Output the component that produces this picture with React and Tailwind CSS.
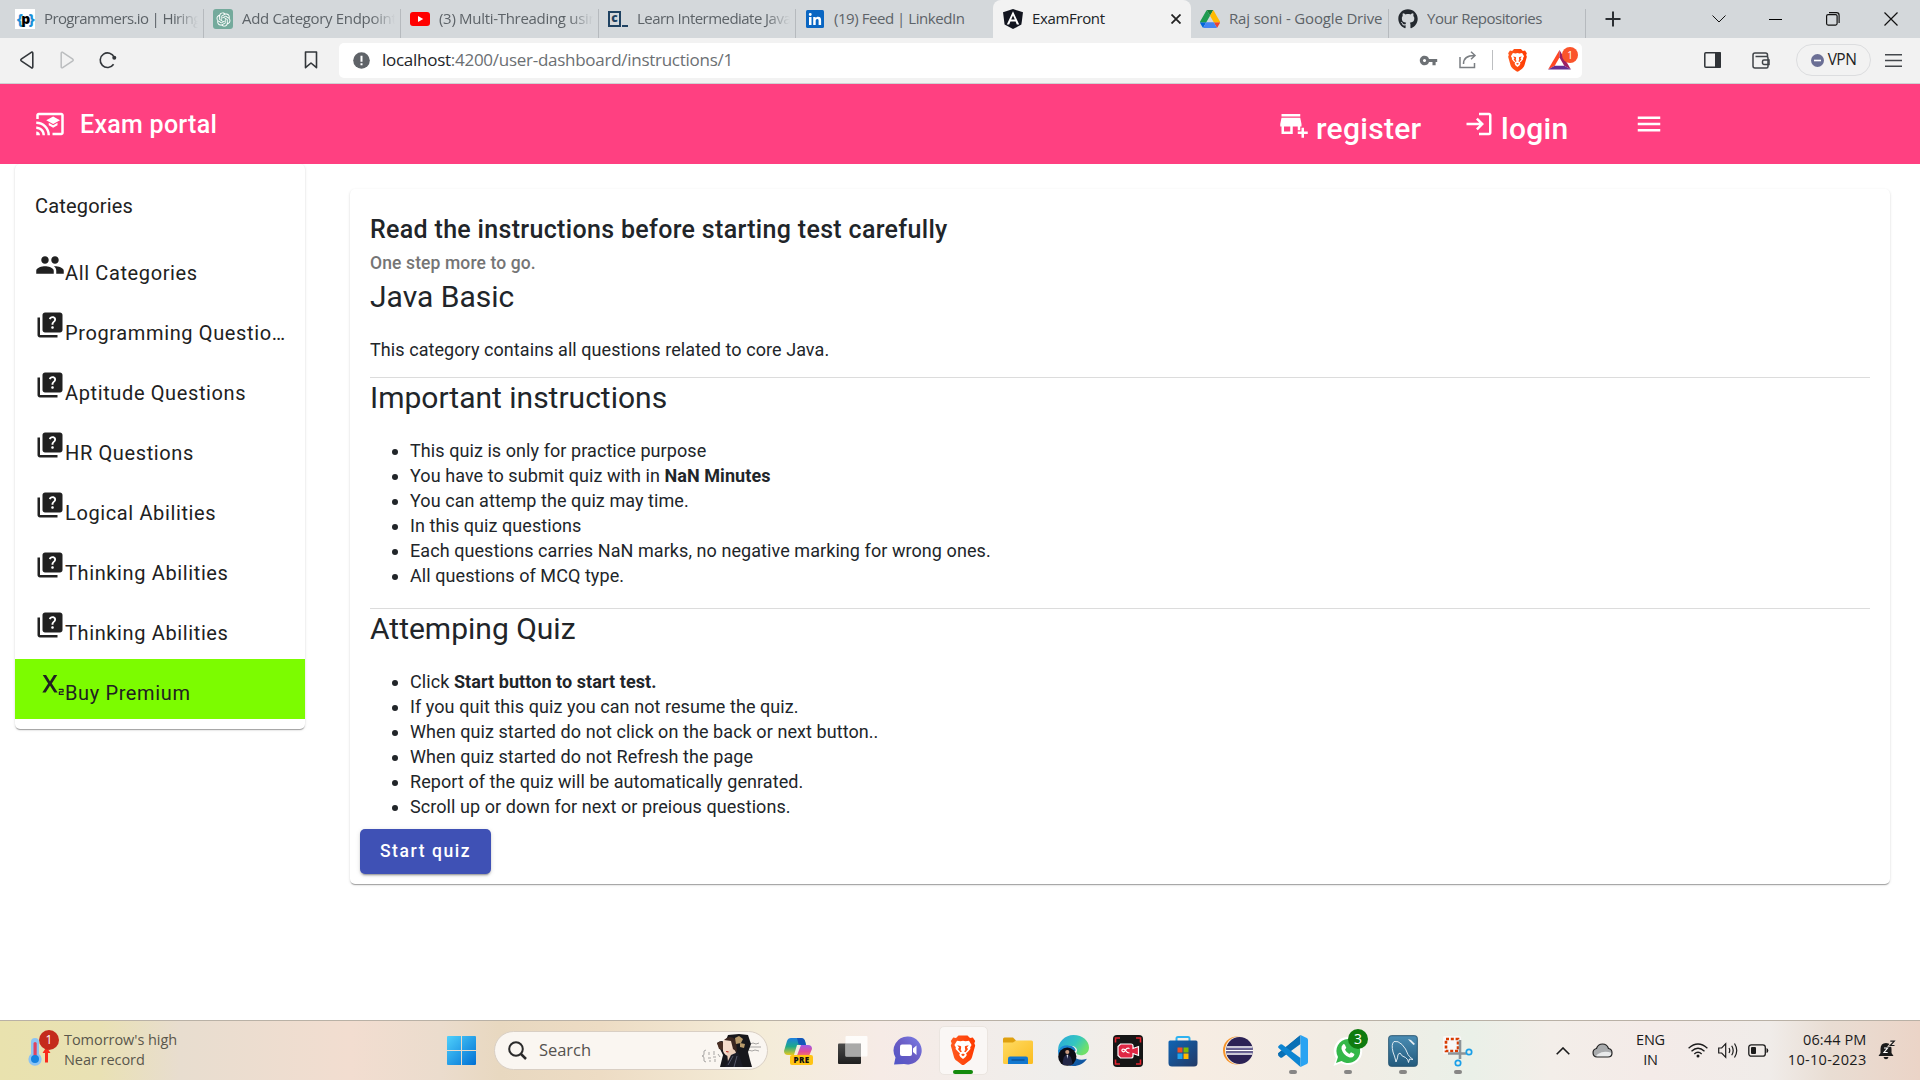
import React from "react";
import {
  MdCastForEducation,
  MdAddBusiness,
  MdLogin,
  MdMenu,
  MdPeople,
  MdQuiz,
  MdSubscript,
  MdVpnKey,
} from "react-icons/md";
import { FaGithub } from "react-icons/fa";
import { RiOpenaiFill } from "react-icons/ri";

const CHROME = "font-['Open_Sans','Noto_Sans',sans-serif]";

/* ---------- shared logos ---------- */

function BraveLogo({ className }) {
  return (
    <svg viewBox="0 0 26 30" className={className}>
      <defs>
        <linearGradient id="brv" x1="0" x2="1">
          <stop offset="0" stopColor="#ff5a1f" />
          <stop offset="1" stopColor="#ff3a00" />
        </linearGradient>
      </defs>
      <path
        fill="url(#brv)"
        d="M17.5 0H8.5L6 2.6 3.2 2 .8 5.4l.9 2.3L.8 10 3.8 21c.6 2.100 1.500 3.400 3.200 4.600L11.500 29c.9.7 2.100.7 3 0l4.500-3.400c1.700-1.200 2.600-2.500 3.200-4.600L25.200 10l-.9-2.300.9-2.300L22.800 2 20 2.600z"
      />
      <path
        fill="#fff"
        d="M13 5.200l2.500.6L19 5.200l2.600 4.300-1.400 2.200.2 1.800-2.700 3.100-1.600 1.100.7 1.700-1.300 2.100L13 23.600l-2.500-2.100-1.300-2.100.7-1.700-1.600-1.100-2.700-3.100.2-1.800-1.400-2.200L7 5.200l3.500.6z"
      />
      <path
        fill="#ff4a10"
        d="M7.300 9.700l3.300.8.6.8-.5 3.500 1.400.9-1.700 1.100-2.500-3.300 1.300-1.200zM18.700 9.700l-3.300.8-.6.8.5 3.500-1.400.9 1.700 1.100 2.500-3.300-1.300-1.200zM11 19.200l2-1.100 2 1.100-2 1.500z"
      />
    </svg>
  );
}

function DriveLogo() {
  return (
    <svg viewBox="0 0 87 78" className="h-[18px] w-5">
      <path fill="#0066da" d="M6.600 66.850l3.850 6.650c.8 1.400 1.950 2.500 3.300 3.300L27.500 53H0c0 1.550.4 3.100 1.200 4.500z" />
      <path fill="#1e9b50" d="M43.650 25L29.900 1.200c-1.350.8-2.500 1.900-3.300 3.300l-25.400 44C.4 49.900 0 51.450 0 53h27.500z" />
      <path fill="#ea4335" d="M73.550 76.800c1.350-.8 2.500-1.900 3.300-3.300l1.600-2.750 7.650-13.250c.8-1.400 1.200-2.950 1.200-4.500H59.800l5.850 11.500z" />
      <path fill="#188038" d="M43.650 25L57.400 1.200C56.050.4 54.500 0 52.900 0H34.400c-1.600 0-3.150.45-4.500 1.200z" />
      <path fill="#4285f4" d="M59.800 53H27.500L13.750 76.800c1.350.8 2.900 1.200 4.500 1.200h50.800c1.600 0 3.150-.45 4.500-1.200z" />
      <path fill="#ffba00" d="M73.400 26.500L60.700 4.500c-.8-1.400-1.950-2.500-3.300-3.300L43.650 25 59.800 53h27.450c0-1.550-.4-3.100-1.200-4.500z" />
    </svg>
  );
}

/* ---------- browser tabs ---------- */

const tabs = [
  {
    title: "Programmers.io | Hiring",
    fade: true,
    width: "w-[204px] pl-[15px]",
    track: "tracking-[-0.620px]",
    icon: (
      <div className="flex h-5 w-5 items-center justify-center bg-white text-[14px] leading-none font-extrabold tracking-[-1.500px]">
        <span className="text-[#1b8fd8]">{"{"}</span>
        <span className="text-black">p</span>
        <span className="text-[#1b8fd8]">{"}"}</span>
      </div>
    ),
  },
  {
    title: "Add Category Endpoint",
    fade: true,
    width: "w-[197px] pl-[9px]",
    track: "tracking-[-0.320px]",
    icon: (
      <div className="flex h-5 w-5 items-center justify-center rounded-[3px] bg-[#74aa9c] text-white">
        <RiOpenaiFill size={17} />
      </div>
    ),
  },
  {
    title: "(3) Multi-Threading usin",
    fade: true,
    width: "w-[198px] pl-[9px]",
    track: "tracking-[-0.3px]",
    icon: (
      <svg viewBox="0 0 20 20" className="h-5 w-5">
        <rect x="0" y="3" width="20" height="14" rx="3" fill="#f00" />
        <path d="M8 7l5.200 3L8 13z" fill="#fff" />
      </svg>
    ),
  },
  {
    title: "Learn Intermediate Java",
    fade: true,
    width: "w-[197px] pl-[9px]",
    track: "tracking-[-0.540px]",
    icon: (
      <div className="flex h-5 w-5 items-end">
        <div className="mb-[2px] flex h-4 w-[13px] shrink-0 items-center justify-center border-2 border-[#1f4262] pb-[2px] text-[12px] leading-none font-extrabold text-[#1f4262]">
          c
        </div>
        <div className="mb-[2px] ml-px h-[2px] w-[6px] bg-[#1f4262]" />
      </div>
    ),
  },
  {
    title: "(19) Feed | LinkedIn",
    width: "w-[197px] pl-[9px]",
    track: "tracking-[-0.450px]",
    noLine: true,
    icon: (
      <svg viewBox="0 0 20 20" className="h-5 w-5">
        <rect x="1" y="1" width="18" height="18" rx="1.500" fill="#0a66c2" />
        <path fill="#fff" d="M4 8h2.500v8H4zM5.250 4a1.450 1.450 0 110 2.900 1.450 1.450 0 010-2.900zM8.200 8h2.400v1.100c.4-.7 1.200-1.300 2.500-1.300 2.500 0 3 1.600 3 3.800V16h-2.500v-3.900c0-1 0-2.100-1.300-2.100s-1.600 1-1.600 2V16H8.200z" />
      </svg>
    ),
  },
  {
    title: "ExamFront",
    width: "w-[198px] pl-[10px]",
    track: "tracking-[-0.350px]",
    active: true,
    icon: (
      <svg viewBox="0 0 20 20" className="h-5 w-5">
        <path fill="#12151f" d="M10 0L0 3.300l1.600 12.300L10 20l8.400-4.400L20 3.300z" />
        <path fill="#fff" d="M10 2.200L3.800 15.500h2.400l1.200-3.100h5.200l1.200 3.100h2.400zm0 4.300l1.800 4.100H8.200z" />
      </svg>
    ),
  },
  {
    title: "Raj soni - Google Drive",
    width: "w-[198px] pl-[9px]",
    track: "tracking-[-0.160px]",
    icon: <DriveLogo />,
  },
  {
    title: "Your Repositories",
    width: "w-[197px] pl-[9px]",
    track: "tracking-[-0.5px]",
    icon: <FaGithub size={20} color="#24292f" />,
  },
];

function TabStrip() {
  return (
    <div className="flex h-[38px] shrink-0 bg-[#d4d8db]">
      {tabs.map((t) => (
        <div
          key={t.title}
          className={`${t.width} flex shrink-0 items-center ${
            t.active ? "rounded-t-[8px] bg-[#f2f2f2] text-[#202428]" : "text-[#5d6368]"
          }`}
        >
          <div className="flex w-5 shrink-0 justify-center">{t.icon}</div>
          <div
            className={`-mt-px ml-[9px] flex-1 overflow-hidden text-[15px] whitespace-nowrap ${t.track} ${
              t.fade ? "mr-[5px] [mask-image:linear-gradient(to_right,black_calc(100%-24px),transparent)]" : ""
            }`}
          >
            {t.title}
          </div>
          {t.active && (
            <svg viewBox="0 0 10 10" className="mr-[10px] h-[10px] w-[10px]" stroke="#222" strokeWidth="1.800">
              <path d="M.5.500l9 9M9.500.500l-9 9" />
            </svg>
          )}
          {!t.active && !t.noLine && <div className="mt-auto h-[29px] w-px bg-[#b6babe]" />}
        </div>
      ))}
      <div className="flex flex-1 items-center">
        <svg viewBox="0 0 16 16" className="ml-[19px] h-4 w-4" stroke="#2b2f33" strokeWidth="2">
          <path d="M8 .500v15M.500 8h15" />
        </svg>
        <div className="ml-[69px] flex flex-1 items-center text-black">
          <div className="flex w-[57px] justify-center">
            <svg viewBox="0 0 14 8" className="h-2 w-[14px]" fill="none" stroke="#111">
              <path d="M.5.500L7 7 13.500.500" />
            </svg>
          </div>
          <div className="flex w-[57px] justify-center">
            <div className="h-px w-[13px] bg-black" />
          </div>
          <div className="flex w-[57px] justify-center">
            <svg viewBox="0 0 14 14" className="h-[14px] w-[14px]" fill="none" stroke="#111" strokeWidth="1.200">
              <rect x=".6" y="2.600" width="10.500" height="10.500" rx="1.500" />
              <path d="M3 .7h7.500a2.600 2.600 0 012.600 2.600V11" />
            </svg>
          </div>
          <div className="flex w-[59px] justify-center">
            <svg viewBox="0 0 14 14" className="h-[14px] w-[14px]" stroke="#111" strokeWidth="1.200">
              <path d="M.5.500l13 13M13.500.500l-13 13" />
            </svg>
          </div>
        </div>
      </div>
    </div>
  );
}

/* ---------- address bar ---------- */

function AddressBar() {
  return (
    <div className="flex h-[46px] shrink-0 items-center border-b border-[#cfd2d4] bg-[#f2f2f2] pr-[18px] pb-px pl-[20px]">
      <svg viewBox="0 0 14 18" className="h-[18px] w-[14px]" fill="none" stroke="#33373b" strokeWidth="1.600" strokeLinejoin="round">
        <path d="M11.300 1.300L1.200 8.200q-.8.800 0 1.600l10.100 6.900q1.500.6 1.500-1V2.300q0-1.600-1.500-1z" />
      </svg>
      <svg viewBox="0 0 14 18" className="ml-[26px] h-[18px] w-[14px]" fill="none" stroke="#bbbdbf" strokeWidth="1.500" strokeLinejoin="round">
        <path d="M2.700 1.300l10.100 6.900q.8.800 0 1.600L2.700 16.700q-1.500.6-1.500-1V2.300q0-1.600 1.500-1z" />
      </svg>
      <svg viewBox="0 0 18 18" className="ml-[25px] h-[18px] w-[18px]" fill="none" stroke="#33373b" strokeWidth="1.600">
        <path d="M14.600 13.300A7.300 7.300 0 1115.300 6.500" />
        <circle cx="15.300" cy="6.800" r="2" fill="#33373b" stroke="none" />
      </svg>
      <svg viewBox="0 0 14 18" className="ml-[187px] h-[18px] w-[14px]" fill="none" stroke="#33373b" strokeWidth="1.600" strokeLinejoin="round">
        <path d="M1.500 1h11v15.700L7 12l-5.500 4.700z" />
      </svg>
      <div className="ml-[21px] flex h-[35px] w-[1243px] items-center rounded-[5px] bg-white pr-[4px] pl-[14px]">
        <svg viewBox="0 0 17 17" className="h-[17px] w-[17px]">
          <circle cx="8.500" cy="8.500" r="8.300" fill="#5f6368" />
          <path d="M7.500 3.700h2v6h-2zM7.500 11.300h2v2h-2z" fill="#fff" />
        </svg>
        <div className="ml-[12px] text-[17px] tracking-[-0.270px] text-[#6b6f73]">
          <span className="text-[#222529]">localhost</span>:4200/user-dashboard/instructions/1
        </div>
        <div className="ml-auto flex items-center">
          <MdVpnKey size={19} color="#6d7175" />
          <svg viewBox="0 0 18 18" className="ml-[21px] h-[18px] w-[18px]" fill="none" stroke="#7b7f83" strokeWidth="1.500">
            <path d="M1 6v10.500h14.500V12M4.500 13c0-5.500 3-8.500 11-8.500M12 .800l4 3.700-4 3.700" />
          </svg>
          <div className="ml-[15px] h-[20px] w-px bg-[#bdbfc1]" />
          <BraveLogo className="ml-[14px] h-[23px] w-[21px]" />
          <div className="relative ml-[20px] h-[26px] w-[30px]">
            <svg viewBox="0 0 24 21" className="mt-[3px] h-[20px] w-[23px]">
              <path d="M12 0L0 20.500l7-4L12 8z" fill="#ff4724" />
              <path d="M12 0l12 20.500-7-4L12 8z" fill="#9e1f63" />
              <path d="M0 20.500h24l-7-4H7z" fill="#662d91" />
            </svg>
            <div className="absolute top-0 right-0 flex h-[16px] w-[16px] items-center justify-center rounded-full bg-[#fb542b] text-[10px] leading-none text-white">
              1
            </div>
          </div>
        </div>
      </div>
      <svg viewBox="0 0 17 16" className="ml-[122px] h-4 w-[17px]">
        <rect x=".8" y=".8" width="15.400" height="14.400" rx="1" fill="none" stroke="#2f3337" strokeWidth="1.500" />
        <rect x="11" y="0" width="6" height="16" rx="1" fill="#2f3337" />
      </svg>
      <svg viewBox="0 0 18 17" className="ml-[31px] h-[17px] w-[18px]" fill="none" stroke="#3f4347" strokeWidth="1.500">
        <path d="M15.500 4.500V3a2 2 0 00-2-2H3a2 2 0 00-2 2v11a2 2 0 002 2h11.500a1.500 1.500 0 001.500-1.500V6a1.500 1.500 0 00-1.500-1.500H3.500" />
        <path d="M17 8h-5a1.500 1.500 0 00-1.500 1.500V11A1.500 1.500 0 0012 12.500h5z" />
      </svg>
      <div className="ml-[26px] flex h-8 w-[75px] items-center justify-center rounded-full border border-[#dcdddf]">
        <svg viewBox="0 0 13 13" className="h-[13px] w-[13px]">
          <circle cx="6.500" cy="6.500" r="6.500" fill="#6b6f95" />
          <path d="M3 5.700h7v1.600H3z" fill="#fff" />
        </svg>
        <span className="ml-[4px] text-[15.500px] tracking-[-0.500px] text-[#222]">VPN</span>
      </div>
      <svg viewBox="0 0 17 13" className="ml-[14px] h-[13px] w-[17px]" stroke="#44484c" strokeWidth="1.400">
        <path d="M0 .700h17M0 6.500h17M0 12.300h17" />
      </svg>
    </div>
  );
}

/* ---------- application ---------- */

function NavBar() {
  return (
    <div className="flex h-20 shrink-0 items-center bg-[#ff4081] font-['Roboto',sans-serif] font-medium text-white">
      <MdCastForEducation size={30} className="ml-[35px]" />
      <span className="mt-[2px] ml-[15px] w-[1199px] text-[25px] tracking-[0.280px]">Exam portal</span>
      <MdAddBusiness size={30} />
      <span className="mt-[9px] ml-[7px] w-[148px] text-[30px] leading-[40px] tracking-[0.280px]">register</span>
      <MdLogin size={30} />
      <span className="mt-[9px] ml-[7px] w-[133px] text-[30px] leading-[40px] tracking-[0.300px]">login</span>
      <MdMenu size={30} />
    </div>
  );
}

const categories = [
  { label: "All Categories", Icon: MdPeople },
  { label: "Programming Questions", Icon: MdQuiz },
  { label: "Aptitude Questions", Icon: MdQuiz },
  { label: "HR Questions", Icon: MdQuiz },
  { label: "Logical Abilities", Icon: MdQuiz },
  { label: "Thinking Abilities", Icon: MdQuiz },
  { label: "Thinking Abilities", Icon: MdQuiz },
  { label: "Buy Premium", Icon: MdSubscript, premium: true },
];

const CARD = "bg-white shadow-[0_2px_1px_-1px_rgba(0,0,0,0.2),0_1px_1px_rgba(0,0,0,0.14),0_1px_3px_rgba(0,0,0,0.12)]";

function Sidebar() {
  return (
    <div className={`h-[565px] w-[290px] rounded-[5px] pb-[10px] text-[20px] text-[#212121] ${CARD}`}>
      <div className="h-[75px] pt-[30px] pl-[20px] leading-[25px] tracking-[0.180px]">Categories</div>
      {categories.map(({ label, Icon, premium }, i) => (
        <div key={i} className={`flex h-[60px] items-start pr-[17px] pl-[20px] ${premium ? "bg-[#7cfc00]" : ""}`}>
          <Icon size={30} className="mt-[11px] shrink-0" />
          <span className="mt-[19px] truncate leading-[30px] tracking-[0.625px]">{label}</span>
        </div>
      ))}
    </div>
  );
}

const important = [
  "This quiz is only for practice purpose",
  <>
    You have to submit quiz with in <b className="font-bold">NaN Minutes</b>
  </>,
  "You can attemp the quiz may time.",
  "In this quiz questions",
  "Each questions carries NaN marks, no negative marking for wrong ones.",
  "All questions of MCQ type.",
];

const attempting = [
  <>
    Click <b className="font-bold">Start button to start test.</b>
  </>,
  "If you quit this quiz you can not resume the quiz.",
  "When quiz started do not click on the back or next button..",
  "When quiz started do not Refresh the page",
  "Report of the quiz will be automatically genrated.",
  "Scroll up or down for next or preious questions.",
];

function Bullets({ items }) {
  return (
    <ul className="list-disc pl-10 tracking-[0.070px]">
      {items.map((item, i) => (
        <li key={i}>{item}</li>
      ))}
    </ul>
  );
}

function Instructions() {
  return (
    <div className={`mt-[25px] h-[695px] w-[1540px] rounded-[5px] px-5 pt-[21px] text-[18px] leading-[25px] text-[#212529] ${CARD}`}>
      <h1 className="text-[25px] leading-[40px] font-medium tracking-[0.320px]">
        Read the instructions before starting test carefully
      </h1>
      <div className="h-[26.500px] text-[17.500px] leading-[27.500px] font-medium tracking-[0.120px] text-[#757575]">One step more to go.</div>
      <h2 className="mb-5 text-[30px] leading-[40px]">Java Basic</h2>
      <p className="mb-[15px] tracking-[0.070px]">This category contains all questions related to core Java.</p>
      <div className="h-px bg-[#dcdcdc]" />
      <h2 className="mb-5 text-[30px] leading-[40px]">Important instructions</h2>
      <Bullets items={important} />
      <div className="mt-5 h-px bg-[#dcdcdc]" />
      <h2 className="mb-5 text-[30px] leading-[40px]">Attemping Quiz</h2>
      <Bullets items={attempting} />
      <button className="mt-[10px] -ml-[10px] h-[45px] w-[131px] rounded-[5px] bg-[#3f51b5] pt-px text-[17.500px] font-medium tracking-[1.560px] text-white shadow-[0_3px_1px_-2px_rgba(0,0,0,0.2),0_2px_2px_rgba(0,0,0,0.14),0_1px_5px_rgba(0,0,0,0.12)]">
        Start quiz
      </button>
    </div>
  );
}

/* ---------- taskbar ---------- */

function Thermometer() {
  return (
    <div className="relative h-[36px] w-[32px]">
      <svg viewBox="0 0 32 36" className="-mt-[2px] h-[36px] w-[32px]">
        <path d="M4 11a4 4 0 018 0v12a6.600 6.600 0 11-8 0z" fill="#8cc4f4" />
        <rect x="6.500" y="11" width="3.200" height="16" rx="1.600" fill="#e0435f" />
        <circle cx="8" cy="28" r="4" fill="#1583e0" />
        <path d="M18 31.500V22h-2.500l4-6 4 6H21v9.500z" fill="#f9291c" />
      </svg>
      <div className="absolute -top-[3px] left-[12px] flex h-5 w-5 items-center justify-center rounded-full bg-[#c42b1c] text-[12px] leading-none text-white">
        1
      </div>
    </div>
  );
}

function Portrait() {
  return (
    <svg viewBox="0 0 62 34" className="h-[34px] w-[62px]">
      <g fill="none" stroke="#a7a5a3" strokeWidth="1">
        <path d="M6 16q-3 0-2 4 0 2-2 2 2 0 2 2-1 4 2 4M9 18v3M8 24h3M10 26v2M14 17v4M13 23h3M15 25v3M18 20l2 3" />
        <path d="M46 13h15M50 10l3-1 3 1 3-1M48 16l4 1 3-1 4 1" />
      </g>
      <path d="M17 9q5-4 8 0l3-8 11-1 9 1 3 9-3 8 2 8 2 7H20l3-12-3-6z" fill="#17171c" />
      <path d="M17 9q4-3 7 0l-1 7-4-1z" fill="#4a2f24" />
      <path d="M23 7q5-6 10 0 2 8-2 15-6 1-8-5z" fill="#f5dccb" />
      <path d="M27 18l7-5 3 9-9 6z" fill="#eccfbc" />
      <path d="M24 6q6-6 12 0l1 12-4-3-2-8z" fill="#3a2620" />
      <path d="M35 4l4-2 4 3-2 4-5 1zM40 9l5 1-1 4-4-1z" fill="#b89a6b" />
      <path d="M25 33l6-12 7-3 5 15z" fill="#1c1d28" />
      <path d="M28 31l5-9M34 33l3-11" stroke="#56586a" strokeWidth="1" />
      <path d="M26 17.500l2.500.3" stroke="#c0392f" strokeWidth="1.200" />
    </svg>
  );
}

const Copilot = (
  <svg viewBox="0 0 30 30" className="h-[30px] w-[30px]">
    <defs>
      <linearGradient id="cpa" x1="0" y1="0" x2="0" y2="1">
        <stop offset="0" stopColor="#1e7fe0" />
        <stop offset=".5" stopColor="#1fa98a" />
        <stop offset="1" stopColor="#e8c91c" />
      </linearGradient>
      <linearGradient id="cpb" x1="0" y1="0" x2="0" y2="1">
        <stop offset="0" stopColor="#a05be8" />
        <stop offset=".5" stopColor="#e04c9a" />
        <stop offset="1" stopColor="#ff8a4c" />
      </linearGradient>
    </defs>
    <path d="M8 2h10q3 0 4 3l1 4h-6l-3 0-3 10H5q-4 0-4-4L4 5q1-3 4-3z" fill="url(#cpa)" />
    <path d="M14 2h4q3 0 4 3l1 4h-5q-3 0-3-3z" fill="#1456b8" />
    <path d="M18 9h7q4 0 4 4l-3 7q-1 2-4 2h-9z" fill="url(#cpb)" />
    <rect x="7" y="19" width="23" height="10" rx="2" fill="#ffc414" />
    <text x="18.500" y="27" textAnchor="middle" fontSize="8" fontWeight="800" fontFamily="Open Sans" letterSpacing=".4" fill="#111">
      PRE
    </text>
  </svg>
);

const TaskView = (
  <svg viewBox="0 0 30 30" className="h-[30px] w-[30px]">
    <defs>
      <linearGradient id="tv" x1="0" y1="0" x2="0" y2="1">
        <stop offset="0" stopColor="#4a4a4a" />
        <stop offset="1" stopColor="#1f1f1f" />
      </linearGradient>
    </defs>
    <rect x="0" y="7.500" width="23" height="20.500" rx="1" fill="url(#tv)" />
    <rect x="7.500" y="0" width="22" height="20.500" rx="1" fill="#fff" fillOpacity=".82" />
    <rect x="7.500" y="7.500" width="15.500" height="13" fill="#a9a9a8" />
  </svg>
);

const Chat = (
  <svg viewBox="0 0 30 30" className="h-[30px] w-[30px]">
    <defs>
      <linearGradient id="ch" x1="1" y1="0" x2="0" y2="1">
        <stop offset="0" stopColor="#7a7fe8" />
        <stop offset=".5" stopColor="#6a5cc4" />
        <stop offset="1" stopColor="#4f55c8" />
      </linearGradient>
    </defs>
    <path d="M15 .500a14 14 0 11-4 27.500L1 28.500l1.500-7A14 14 0 0115 .500z" fill="url(#ch)" />
    <rect x="7" y="8.500" width="12" height="11.500" rx="2" fill="#fff" />
    <path d="M20 12.500l3.500-3v9.500L20 16z" fill="#fff" />
  </svg>
);

const Explorer = (
  <svg viewBox="0 0 30 30" className="h-[30px] w-[30px]">
    <defs>
      <linearGradient id="fx" x1="0" y1="0" x2="1" y2="1">
        <stop offset="0" stopColor="#ffdb63" />
        <stop offset="1" stopColor="#fbbc1e" />
      </linearGradient>
    </defs>
    <path d="M0 3Q0 1.500 1.500 1.500H10l3 3v6H0z" fill="#dfa00f" />
    <path d="M0 6.500h10l3-2h15.500Q30 4.500 30 6v20.500q0 1.500-1.500 1.500H1.500Q0 28 0 26.500z" fill="url(#fx)" />
    <path d="M5 28v-5.500q0-2 2-2h16q2 0 2 2V28z" fill="#1277cf" />
    <path d="M8.500 24h13" stroke="#0b4f92" strokeWidth="1.300" />
  </svg>
);

const Edge = (
  <svg viewBox="0 0 30 30" className="h-[31px] w-[31px]">
    <defs>
      <linearGradient id="eg" x1="0" y1="0" x2="1" y2=".5">
        <stop offset="0" stopColor="#2aa5e0" />
        <stop offset=".6" stopColor="#34c7bf" />
        <stop offset="1" stopColor="#6fe06a" />
      </linearGradient>
      <linearGradient id="eb" x1="0" y1="0" x2="1" y2="1">
        <stop offset="0" stopColor="#1a8fdc" />
        <stop offset="1" stopColor="#0f4a94" />
      </linearGradient>
    </defs>
    <path d="M0 15A15 15 0 0115 0c9 0 15 6 15 12 0 5-4 7.500-8 7.500-3 0-5-1.500-4-3 2-3-2-7-8-6Q3 11 0 15z" fill="url(#eg)" />
    <path d="M0 15q3-5 9-5c5 0 8 3 8 5-5 3-1 9 6 9 3 0 4-1 5-1-3 5-8 7-13 7A15 15 0 010 15z" fill="url(#eb)" />
    <circle cx="9" cy="21" r="8.800" fill="#0d0d16" />
    <path d="M4.500 29q0-10 4.500-10t5 10z" fill="#232747" />
    <circle cx="9" cy="16.500" r="2" fill="#c99a80" />
    <path d="M8.300 19h1.600l-.8 4z" fill="#dfe3ee" />
  </svg>
);

const Recorder = (
  <svg viewBox="0 0 30 32" className="h-[32px] w-[30px]">
    <rect width="30" height="32" rx="4" fill="#151515" />
    <path d="M2.500 7.500V3h4.500M23 3h4.500v4.500M27.500 24.500V29H23M7 29H2.500v-4.500" fill="none" stroke="#e1242f" strokeWidth="1.600" />
    <path d="M7.500 9H18q2 0 2 2v2.500l5.500-2v9l-5.500-2V21q0 2-2 2H7.500L5 20.500v-9z" fill="#df2744" stroke="#fff" strokeWidth="1.200" />
    <path d="M16.500 13.500q-2.500-1-4 1.500t-3 1.500q-1.500-1.500.5-2.500 2 0 3 2t3.500 2" fill="none" stroke="#fff" strokeWidth="1.200" />
  </svg>
);

const Store = (
  <svg viewBox="0 0 30 32" className="h-[32px] w-[30px]">
    <defs>
      <linearGradient id="st" x1="0" y1="0" x2="1" y2="1">
        <stop offset="0" stopColor="#0f64b4" />
        <stop offset="1" stopColor="#243a66" />
      </linearGradient>
    </defs>
    <path d="M8.500 6V3.500Q8.500 2 10 2h10q1.500 0 1.500 1.500V6" fill="none" stroke="#2fb2f0" strokeWidth="2" />
    <path d="M.5 7Q.5 5.500 2 5.500h26q1.500 0 1.500 1.500v21q0 3.500-3.500 3.500H4Q.5 31.500.5 28z" fill="url(#st)" />
    <path d="M9.500 12.500h5v5h-5z" fill="#f25022" />
    <path d="M15.500 12.500h5v5h-5z" fill="#7fba00" />
    <path d="M9.500 18.500h5v5.500h-5z" fill="#1fa4ee" />
    <path d="M15.500 18.500h5v5.500h-5z" fill="#ffb900" />
  </svg>
);

const Eclipse = (
  <svg viewBox="0 0 30 30" className="h-[30px] w-[30px]">
    <circle cx="14" cy="14.500" r="14" fill="#f7942a" />
    <circle cx="16" cy="14.500" r="14" fill="#f3ede4" />
    <circle cx="16.500" cy="14.500" r="13.500" fill="#2c2255" />
    <path d="M3.500 11h26M3 14.500h27M3.500 18h26" stroke="#fff" strokeWidth="1.700" />
    <path d="M3 12.700h27M3 16.300h27" stroke="#7a74a8" strokeWidth="1" />
  </svg>
);

const VsCode = (
  <svg viewBox="0 0 30 32" className="h-[32px] w-[30px]">
    <path d="M22.500 0L3.700 20.500 2 21.500.300 19.500q-.6-.8 0-1.600z" fill="#0065a9" />
    <path d="M22.500 0v9L4.200 22.400q-1 .6-2 0L.6 20.900q-1-.9 0-1.900z" fill="#0a70b5" />
    <path d="M22.500 32v-9L4.200 9.600q-1-.6-2 0L.6 11.100q-1 .9 0 1.900z" fill="#0d85d2" />
    <path d="M22.500 0l6.300 3q1.200.7 1.200 2v22q0 1.300-1.200 2l-6.300 3z" fill="#2aa3f2" />
  </svg>
);

const WhatsApp = (
  <div className="relative h-[30px] w-[30px]">
    <svg viewBox="0 0 30 30" className="h-[30px] w-[30px]">
      <path d="M15 1a14 14 0 11-7 26L.5 30l2.600-7.500A14 14 0 0115 1z" fill="#fff" />
      <path d="M15 3a12 12 0 11-6.500 22L3 27l2-6A12 12 0 0115 3z" fill="#34b84a" />
      <path d="M10 8.500q1-1 2 .5l1.300 2.800-1.300 2q1.600 3 4.300 4.200l1.700-1.800 3 1.500q.8.500 0 2-2 2.600-5 1.600Q10.500 19.500 8.500 13q-.5-3 1.500-4.500z" fill="#fff" />
    </svg>
    <div className="absolute -top-[7px] left-[15px] flex h-[20px] w-[20px] items-center justify-center rounded-full bg-[#0f7b0f] text-[14px] leading-none text-white">
      3
    </div>
  </div>
);

const Workbench = (
  <svg viewBox="0 0 30 32" className="h-[32px] w-[30px]">
    <defs>
      <linearGradient id="wb" x1="0" y1="0" x2="0" y2="1">
        <stop offset="0" stopColor="#4a8db4" />
        <stop offset="1" stopColor="#235a7c" />
      </linearGradient>
    </defs>
    <rect x=".7" y=".7" width="28.600" height="30.600" rx="2.500" fill="url(#wb)" stroke="#2b5873" />
    <path d="M8 27Q7 22 5 17 3 9 6 6.500q4-1 8 3 4 4 6 10 1 2 5 5l-3.500-.5-1 3.500q0-3-3-5-4-1-5.500-4.500l-2 1.500q0 3-2 7.500z" fill="none" stroke="#dfeaf1" strokeWidth="1" />
    <path d="M20 4l3 1 4 4-1.500 1-4-4z" fill="#e8eef2" />
  </svg>
);

const Snip = (
  <svg viewBox="0 0 30 32" className="h-[32px] w-[30px]">
    <rect x="0" y="1" width="18" height="18" rx="2" fill="#f8f8f8" />
    <rect x="3" y="4" width="12" height="12" fill="none" stroke="#d83b01" strokeWidth="2.600" strokeDasharray="3 1.800" />
    <path d="M17 5v19M5 18.500h18" stroke="#8d9397" strokeWidth="2.600" />
    <circle cx="26" cy="17" r="2.700" fill="none" stroke="#1a9fe8" strokeWidth="1.700" />
    <circle cx="15" cy="28" r="2.700" fill="none" stroke="#1a9fe8" strokeWidth="1.700" />
  </svg>
);

const apps = [
  { name: "copilot", art: Copilot },
  { name: "taskview", art: TaskView },
  { name: "chat", art: Chat },
  { name: "brave", art: <BraveLogo className="h-[31px] w-[26px]" />, active: true },
  { name: "explorer", art: Explorer },
  { name: "edge", art: Edge },
  { name: "recorder", art: Recorder },
  { name: "store", art: Store },
  { name: "eclipse", art: Eclipse },
  { name: "vscode", art: VsCode, open: true },
  { name: "whatsapp", art: WhatsApp, open: true },
  { name: "workbench", art: Workbench, open: true },
  { name: "snip", art: Snip, open: true },
];

function Taskbar() {
  return (
    <div className="flex h-[60px] shrink-0 items-center border-t border-[#b9b1a6] bg-[linear-gradient(90deg,#e9e2ae_0px,#e9e1b4_100px,#e8ddcf_180px,#f2ddd0_350px,#ebdccd_440px,#e8d8c0_500px,#eddcc4_600px,#f4ecd8_760px,#f6ebe6_880px,#efeeec_1060px,#f7ede3_1190px,#f2ece4_1330px,#eaf0e8_1470px,#f3eee9_1550px,#f4ebe8_1650px,#f0ece9_1770px,#e9ddd3_1830px,#ebd4c7_1920px)]">
      <div className="ml-[27px] flex w-[420px] items-center">
        <Thermometer />
        <div className="-mt-[2px] ml-[5px] text-[14.500px] leading-[20px] tracking-[-0.050px] text-[#5a574c]">
          <div>Tomorrow's high</div>
          <div>Near record</div>
        </div>
      </div>
      <svg viewBox="0 0 29 29" className="h-[29px] w-[29px]">
        <defs>
          <linearGradient id="win" x1="0" y1="0" x2="1" y2="1">
            <stop offset="0" stopColor="#4fd0fb" />
            <stop offset="1" stopColor="#0070d4" />
          </linearGradient>
        </defs>
        <path d="M1 0h13v14H0V1q0-1 1-1zM15 0h13q1 0 1 1v13H15zM0 15h14v14H1q-1 0-1-1zM15 15h14v13q0 1-1 1H15z" fill="url(#win)" />
      </svg>
      <div className="ml-[18px] flex h-[39px] w-[274px] items-center rounded-full border border-[#d9cfc4] bg-[#faf6f1] pr-[5px] pl-[13px]">
        <svg viewBox="0 0 19 19" className="h-[19px] w-[19px]" fill="none" stroke="#2a2a2a" strokeWidth="2">
          <circle cx="8" cy="8" r="6.800" />
          <path d="M13 13l5 5" strokeWidth="2.500" />
        </svg>
        <span className="ml-[12px] text-[16.500px] tracking-[-0.050px] text-[#55524f]">Search</span>
        <div className="ml-auto">
          <Portrait />
        </div>
      </div>
      <div className="ml-[2.500px] flex">
        {apps.map((a) => (
          <div key={a.name} className="flex w-[55px] justify-center">
            <div
              className={`relative flex h-[49px] w-[49px] items-center justify-center rounded-[5px] ${
                a.active ? "border border-[#ebe5e0] bg-[#faf7f5]" : ""
              }`}
            >
              {a.art}
              {a.active && <div className="absolute bottom-0 h-[4px] w-[20px] rounded-full bg-[#138a0c]" />}
              {a.open && <div className="absolute bottom-px h-[4px] w-[8px] rounded-full bg-[#878685]" />}
            </div>
          </div>
        ))}
      </div>
      <div className="ml-[70px] flex items-center text-[#1b1b1b]">
        <svg viewBox="0 0 14 8" className="h-2 w-[14px]" fill="none" stroke="#1b1b1b" strokeWidth="1.600">
          <path d="M.7 7.300L7 1l6.300 6.300" />
        </svg>
        <svg viewBox="0 0 21 15" className="-mt-px ml-[22px] h-[15px] w-[21px]">
          <path d="M5 14a4.300 4.300 0 01-.5-8.500Q6 1 10.500 1t6 4.500Q20 6 20 10t-4 4z" fill="#a9abad" />
          <path d="M6 11q6-4 14-1 0 4-4 4H5q-2-1 1-3z" fill="#e9eaeb" />
          <path d="M5 14a4.300 4.300 0 01-.5-8.500Q6 1 10.500 1t6 4.500Q20 6 20 10t-4 4z" fill="none" stroke="#222" strokeWidth="1.200" />
        </svg>
        <div className="-mt-px ml-[15px] w-[46px] text-center text-[14.500px] leading-[20px] tracking-[-0.200px]">
          <div>ENG</div>
          <div>IN</div>
        </div>
        <svg viewBox="0 0 20 15" className="ml-[14px] h-[15px] w-[20px]" fill="none" stroke="#1b1b1b" strokeWidth="1.300">
          <path d="M.6 5.200q9.400-8.400 18.800 0M3.500 8.200q6.500-6 13 0M6.300 11q3.700-3.400 7.400 0" />
          <circle cx="10" cy="13" r="1.500" fill="#1b1b1b" stroke="none" />
        </svg>
        <svg viewBox="0 0 21 17" className="ml-[10px] h-[17px] w-[21px]" fill="none" stroke="#1b1b1b" strokeWidth="1.200">
          <path d="M.7 6h3l4-4.300v13.600L3.700 11h-3zM11 6q1.500 2.500 0 5M13.700 3.700q3 4.800 0 9.600M16.500 1.500q4.500 7 0 14" />
        </svg>
        <svg viewBox="0 0 21 13" className="ml-[9px] h-[13px] w-[21px]">
          <rect x=".8" y=".8" width="16.500" height="11.400" rx="2.500" fill="none" stroke="#1b1b1b" strokeWidth="1.300" />
          <rect x="3" y="3" width="5" height="7" rx="1" fill="#1b1b1b" />
          <path d="M18.500 4q1.800.5 1.800 2.500t-1.800 2.500z" fill="#1b1b1b" />
        </svg>
        <div className="-mt-[2px] ml-[17px] w-[81px] text-right text-[14.500px] leading-[20px] whitespace-nowrap">
          <div className="tracking-[0.120px]">06:44 PM</div>
          <div className="tracking-[0.300px]">10-10-2023</div>
        </div>
        <svg viewBox="0 0 18 20" className="-mt-px ml-[11px] h-[20px] w-[18px]">
          <path d="M8 3q5.500 0 5.500 6v4l2 3H.5l2-3V9Q2.500 3 8 3z" fill="#1b1b1b" />
          <path d="M5.500 17h5q-.5 2.200-2.500 2.200T5.500 17z" fill="#1b1b1b" />
          <path d="M6 8h3.500L6 12.500h3.700" fill="none" stroke="#fff" strokeWidth="1.200" />
          <path d="M12 1.200h4L12 5.500h4.500" fill="none" stroke="#ecdfd6" strokeWidth="2.600" />
          <path d="M12.300 1.200h4L12.300 5.500h4.200" fill="none" stroke="#1b1b1b" strokeWidth="1.200" />
        </svg>
      </div>
    </div>
  );
}

export default function App() {
  return (
    <div className={`flex h-[1080px] w-[1920px] flex-col overflow-hidden bg-white ${CHROME}`}>
      <TabStrip />
      <AddressBar />
      <NavBar />
      <div className="flex flex-1 gap-[45px] pl-[15px] font-['Roboto',sans-serif]">
        <Sidebar />
        <Instructions />
      </div>
      <Taskbar />
    </div>
  );
}
